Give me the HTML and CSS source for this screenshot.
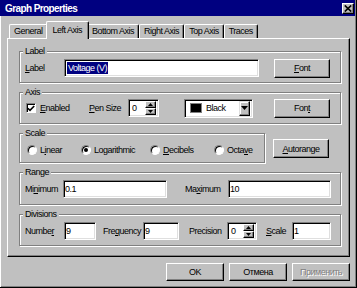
FILE: index.html
```html
<!DOCTYPE html>
<html>
<head>
    <title>Graph Properties</title>
<link rel="stylesheet" href="styles.css">
</head>
<body>
<div class="window">
    <div class="titlebar">
        <span class="title">Graph Properties</span>
        <span class="close"><svg width="8" height="7" viewBox="0 0 8 7"><path d="M0.8 0.5L7.2 6.5M7.2 0.5L0.8 6.5" stroke="#000" stroke-width="1.7"/></svg></span>
    </div>

    <div class="tabs">
        <div class="tab">General</div>
        <div class="tab active">Left Axis</div>
        <div class="tab">Bottom Axis</div>
        <div class="tab">Right Axis</div>
        <div class="tab">Top Axis</div>
        <div class="tab">Traces</div>
    </div>

    <div class="panel">
        <!-- Label -->
        <fieldset class="group">
            <legend>Label</legend>
            <div class="row">
                <span class="lbl w-39"><u>L</u>abel</span>
                <div class="field w-195"><span class="sel">Voltage (V)</span></div>
                <button class="btn push-right"><u>F</u>ont</button>
            </div>
        </fieldset>

        <!-- Axis -->
        <fieldset class="group group-axis">
            <legend>Axis</legend>
            <div class="row">
                <span class="check w-64">
                    <span class="check-box"><svg width="8" height="7" viewBox="0 0 8 7"><path d="M0.8 3.2L3 5.4L7.2 1" fill="none" stroke="#000" stroke-width="1.6"/></svg></span>
                    <u>E</u>nabled
                </span>
                <span class="lbl w-39"><u>P</u>en Size</span>
                <div class="field spin w-31">
                    <span class="spin-val">0</span>
                    <span class="spin-btns">
                        <span class="spin-btn"><svg width="5" height="3" viewBox="0 0 5 3"><path d="M2.5 0L5 3H0z"/></svg></span>
                        <span class="spin-btn"><svg width="5" height="3" viewBox="0 0 5 3"><path d="M0 0H5L2.5 3z"/></svg></span>
                    </span>
                </div>
                <div class="field combo">
                    <span class="swatch"></span>
                    <span class="combo-text">Black</span>
                    <span class="drop"><svg width="7" height="4" viewBox="0 0 7 4"><path d="M0 0H7L3.5 4z"/></svg></span>
                </div>
                <button class="btn push-right">Fon<u>t</u></button>
            </div>
        </fieldset>

        <!-- Scale -->
        <div class="scale-row">
            <fieldset class="group group-scale">
                <legend>Scale</legend>
                <div class="row">
                    <span class="option w-54"><span class="radio"></span>L<u>i</u>near</span>
                    <span class="option w-69"><span class="radio"><span class="dot"></span></span>Lo<u>g</u>arithmic</span>
                    <span class="option w-64"><span class="radio"></span><u>D</u>ecibels</span>
                    <span class="option"><span class="radio"></span>Octa<u>v</u>e</span>
                </div>
            </fieldset>
            <button class="btn btn-auto"><u>A</u>utorange</button>
        </div>

        <!-- Range -->
        <fieldset class="group group-range">
            <legend>Range</legend>
            <div class="row">
                <span class="lbl w-38">Mi<u>n</u>imum</span>
                <input class="field w-104" value="0.1">
                <span class="lbl w-43 ml-18">Ma<u>x</u>imum</span>
                <input class="field w-103" value="10">
            </div>
        </fieldset>

        <!-- Divisions -->
        <fieldset class="group group-div">
            <legend>Divisions</legend>
            <div class="row">
                <span class="lbl w-39">Numbe<u>r</u></span>
                <input class="field w-32" value="9">
                <span class="lbl w-40 ml-7">Fre<u>q</u>uency</span>
                <input class="field w-36" value="9">
                <span class="lbl w-38 ml-10">Precision</span>
                <div class="field spin w-30">
                    <span class="spin-val">0</span>
                    <span class="spin-btns">
                        <span class="spin-btn"><svg width="5" height="3" viewBox="0 0 5 3"><path d="M2.5 0L5 3H0z"/></svg></span>
                        <span class="spin-btn"><svg width="5" height="3" viewBox="0 0 5 3"><path d="M0 0H5L2.5 3z"/></svg></span>
                    </span>
                </div>
                <span class="lbl w-26 ml-9"><u>S</u>cale</span>
                <input class="field w-39" value="1">
            </div>
        </fieldset>
    </div>

    <div class="actions">
        <button class="btn btn-wide">OK</button>
        <button class="btn btn-wide">Отмена</button>
        <button class="btn btn-wide disabled">Применить</button>
    </div>
</div>
</body>
</html>
```

FILE: styles.css
```css
body {
  margin: 0;
  background-color: #c0c0c0;
  font-family: "Liberation Sans", Arial, sans-serif;
  font-size: 9px;
  letter-spacing: -0.5px;
  color: #000;
}

.window {
  width: 357px;
  height: 288px;
  box-sizing: border-box;
  border-right: 1px solid #000;
  border-bottom: 1px solid #000;
  box-shadow: inset 1px 0 0 #fff, inset -1px -1px 0 #808080;
  display: flex;
  flex-direction: column;
}

/* title bar */
.titlebar {
  height: 16px;
  flex: none;
  margin-right: 1px;
  padding: 0 1px 0 5px;
  background-color: #000080;
  color: #fff;
  display: flex;
  align-items: center;
}

.title {
  font-weight: bold;
  font-size: 10px;
  letter-spacing: -0.6px;
}

.close {
  margin-left: auto;
  width: 12px;
  height: 11px;
  box-sizing: border-box;
  background-color: #c0c0c0;
  border: 1px solid;
  border-color: #fff #000 #000 #fff;
  box-shadow: inset -1px -1px 0 #808080;
  display: flex;
  align-items: center;
  justify-content: center;
}

/* tabs */
.tabs {
  height: 22px;
  flex: none;
  padding-left: 9px;
  display: flex;
  align-items: flex-end;
}

.tab {
  height: 14px;
  box-sizing: border-box;
  padding: 0 4px;
  line-height: 13px;
  border: 1px solid #fff;
  border-right-color: #000;
  border-bottom: none;
  border-radius: 2px 2px 0 0;
  box-shadow: inset -1px 0 0 #808080;
}

.tab.active {
  height: 18px;
  margin: 0 -2px -1px;
  padding: 2px 6px 0;
  background-color: #c0c0c0;
  position: relative;
  z-index: 1;
}

/* tab page */
.panel {
  margin-left: 7px;
  width: 343px;
  height: 219px;
  flex: none;
  box-sizing: border-box;
  border: 1px solid #fff;
  border-right-color: #000;
  border-bottom-color: #000;
  box-shadow: inset -1px -1px 0 #808080;
  padding: 7px 8px 0 11px;
  display: flex;
  flex-direction: column;
  gap: 4px;
}

.group {
  margin: 0;
  min-width: 0;
  padding: 2px 10px 4px 5px;
  border: 1px solid #808080;
  box-shadow: 1px 1px 0 #fff, inset 1px 1px 0 #fff;
}

.group legend {
  padding: 0 2px;
  margin-left: -2px;
  line-height: 10px;
  background-color: #c0c0c0;
}

.group-axis {
  padding-top: 1px;
  padding-bottom: 5px;
}

.group-scale {
  width: 246px;
  flex: none;
  box-sizing: border-box;
  padding-bottom: 2px;
}

.group-range {
  padding-bottom: 5px;
}

.scale-row {
  display: flex;
  align-items: flex-end;
}

.row {
  height: 20px;
  display: flex;
  align-items: center;
}

.lbl {
  flex: none;
  white-space: nowrap;
}

.push-right {
  margin-left: auto;
}

.w-26 { width: 26px; }
.w-30 { width: 30px; }
.w-31 { width: 31px; }
.w-32 { width: 32px; }
.w-36 { width: 36px; }
.w-38 { width: 38px; }
.w-39 { width: 39px; }
.w-40 { width: 40px; }
.w-43 { width: 43px; }
.w-54 { width: 54px; }
.w-64 { width: 64px; }
.w-69 { width: 69px; }
.w-103 { width: 103px; }
.w-104 { width: 104px; }
.w-195 { width: 195px; }
.ml-7 { margin-left: 7px; }
.ml-9 { margin-left: 9px; }
.ml-10 { margin-left: 10px; }
.ml-18 { margin-left: 18px; }

/* sunken fields */
.field {
  height: 18px;
  flex: none;
  box-sizing: border-box;
  margin: 0;
  padding: 0 1px;
  border: 1px solid;
  border-color: #808080 #fff #fff #808080;
  box-shadow: inset 1px 1px 0 #000, inset -1px -1px 0 #dfdfdf;
  background-color: #fff;
  font: inherit;
  letter-spacing: inherit;
  color: #000;
  outline: none;
  display: flex;
  align-items: center;
}

.sel {
  margin-left: 1px;
  padding: 0 1px;
  line-height: 12px;
  background-color: #000080;
  color: #fff;
}

.spin {
  padding: 2px;
  padding-left: 3px;
}

.spin-val {
  flex: 1;
}

.spin-btns {
  width: 11px;
  height: 14px;
  display: flex;
  flex-direction: column;
}

.spin-btn {
  flex: 1;
  box-sizing: border-box;
  background-color: #c0c0c0;
  border: 1px solid;
  border-color: #fff #000 #000 #fff;
  box-shadow: inset -1px -1px 0 #808080;
  display: flex;
  align-items: center;
  justify-content: center;
}

.combo {
  width: 69px;
  height: 19px;
  margin-left: 25px;
  padding: 2px;
}

.swatch {
  width: 12px;
  height: 10px;
  margin-left: 3px;
  box-sizing: border-box;
  background-color: #000;
  border: 1px solid #808080;
}

.combo-text {
  margin-left: 4px;
}

.drop {
  margin-left: auto;
  width: 11px;
  height: 15px;
  box-sizing: border-box;
  background-color: #c0c0c0;
  border: 1px solid;
  border-color: #dfdfdf #000 #000 #dfdfdf;
  box-shadow: inset -1px -1px 0 #808080, inset 1px 1px 0 #fff;
  display: flex;
  align-items: center;
  justify-content: center;
}

/* checkbox and radios */
.check,
.option {
  flex: none;
  display: flex;
  align-items: center;
  white-space: nowrap;
}

.check {
  padding-left: 1px;
  box-sizing: border-box;
}

.check-box {
  width: 10px;
  height: 10px;
  margin-right: 4px;
  box-sizing: border-box;
  border: 1px solid;
  border-color: #808080 #fff #fff #808080;
  box-shadow: inset 1px 1px 0 #000;
  background-color: #fff;
  display: flex;
  align-items: center;
  justify-content: center;
}

.option {
  padding-left: 2px;
  box-sizing: border-box;
}

.radio {
  width: 10px;
  height: 10px;
  margin-right: 3px;
  box-sizing: border-box;
  border-radius: 50%;
  border: 1px solid;
  border-color: #808080 #fff #fff #808080;
  box-shadow: inset 1px 1px 0 #000;
  background-color: #fff;
  display: flex;
  align-items: center;
  justify-content: center;
}

.dot {
  width: 4px;
  height: 4px;
  border-radius: 50%;
  background-color: #000;
}

/* push buttons */
.btn {
  width: 56px;
  height: 19px;
  flex: none;
  box-sizing: border-box;
  padding: 0;
  background-color: #c0c0c0;
  border: 1px solid;
  border-color: #fff #000 #000 #fff;
  box-shadow: inset -1px -1px 0 #808080;
  font: inherit;
  letter-spacing: inherit;
  color: #000;
}

.btn-auto {
  margin: 0 0 5px 8px;
}

.btn-wide {
  width: 58px;
  height: 18px;
}

.btn.disabled {
  color: #808080;
  text-shadow: 1px 1px 0 #fff;
}

.actions {
  width: 343px;
  margin: 6px 0 0 7px;
  display: flex;
  justify-content: flex-end;
  gap: 5px;
}
```
